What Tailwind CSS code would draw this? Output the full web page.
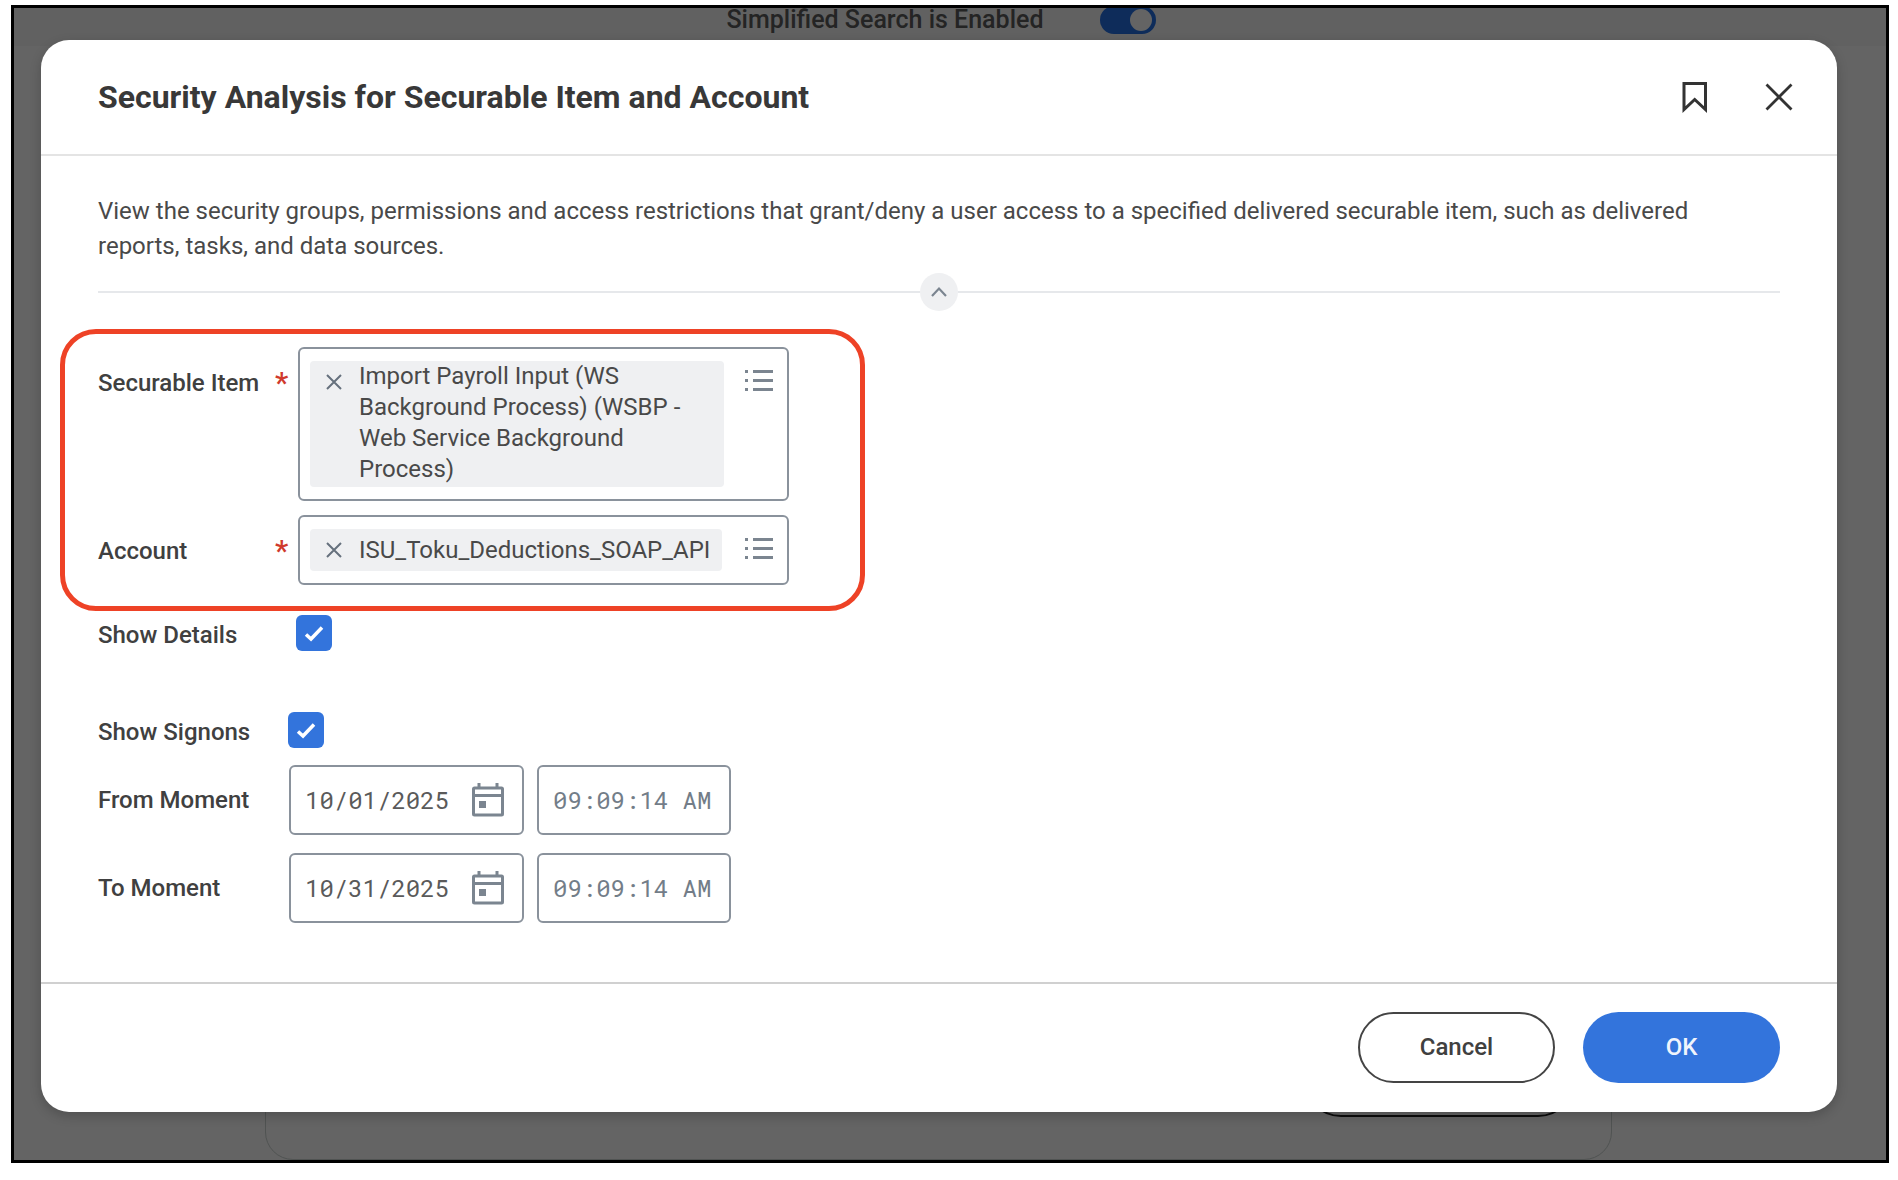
<!DOCTYPE html>
<html lang="en">
<head>
<meta charset="utf-8">
<meta name="viewport" content="width=device-width, initial-scale=1">
<title>Security Analysis for Securable Item and Account</title>
<script src="https://cdn.jsdelivr.net/npm/@tailwindcss/browser@4"></script>
</head>
<body class="min-h-screen bg-white pt-[5px] pr-[9px] pb-[17px] pl-[11px] font-['Roboto','Liberation_Sans',sans-serif] text-2xl text-[#494949]">
<div class="relative isolate overflow-hidden border-3 border-black bg-[#646464] pt-8 pr-[49px] pb-12 pl-[27px]">

  <!-- Page behind the dialog -->
  <div class="absolute inset-x-0 top-0 -z-10 flex h-[38px] items-end justify-center bg-[#616161] pb-3">
    <div class="flex h-7 items-center gap-14 pr-[18px]">
      <span class="text-[25px] leading-7 font-medium text-[#242424]" id="search-label">Simplified Search is Enabled</span>
      <button type="button" role="switch" aria-checked="true" aria-labelledby="search-label" class="flex h-7 w-14 items-center justify-end rounded-full bg-[#0e2c5a] px-1"><span class="size-[22px] rounded-full bg-[#646464]"></span></button>
    </div>
  </div>
  <div class="absolute right-[274px] bottom-0 left-[251px] -z-10 flex h-[120px] items-start justify-end rounded-b-[28px] border border-[#505352] pr-[35px]">
    <div class="h-[76px] w-[273px] rounded-full border-2 border-[#0c0c0c]"></div>
  </div>

  <!-- Dialog -->
  <main role="dialog" aria-labelledby="title" class="rounded-[28px] bg-white shadow-[0_4px_12px_rgba(0,0,0,0.2)]">
    <header class="flex h-[116px] items-center justify-between border-b-2 border-[#e4e4e4] pr-10 pl-[57px]">
      <h1 id="title" class="text-[32px] font-bold text-[#383838]">Security Analysis for Securable Item and Account</h1>
      <div class="flex items-center gap-12">
        <button type="button" aria-label="Bookmark" class="flex size-9 items-center justify-center">
          <svg class="h-8 w-7" viewBox="0 0 28 32" fill="none" stroke="#333" stroke-width="3"><path d="M3 2.500H24.500V28.500L13.700 18.500L3 28.500Z"/></svg>
        </button>
        <button type="button" aria-label="Close" class="flex size-9 items-center justify-center">
          <svg class="size-7" viewBox="0 0 28 28" fill="none" stroke="#333" stroke-width="2.800"><path d="M1.500 1.500L26.500 26.500M26.500 1.500L1.500 26.500"/></svg>
        </button>
      </div>
    </header>

    <div class="px-[57px] pt-[38px] pb-[59px]">
      <p class="pr-12 leading-[35px]">View the security groups, permissions and access restrictions that grant/deny a user access to a specified delivered securable item, such as delivered reports, tasks, and data sources.</p>
      <div class="mt-[9px] flex items-center">
        <div class="h-0.5 grow bg-[#e6e8eb]"></div>
        <button type="button" aria-label="Collapse description" class="flex size-[38px] items-center justify-center rounded-full bg-[#eff0f2]">
          <svg class="h-3 w-4" viewBox="0 0 16 12" fill="none" stroke="#7b8590" stroke-width="2.200"><path d="M1 10L8 2.500L15 10"/></svg>
        </button>
        <div class="h-0.5 grow bg-[#e6e8eb]"></div>
      </div>

      <form>
        <fieldset class="-ml-[38px] mt-[18px] grid h-[282px] w-[805px] grid-cols-[169px_15px_491px] content-start gap-x-2 gap-y-[14px] rounded-[36px] border-5 border-[#ee4226] pt-[13px] pl-[33px]">
          <label for="item" class="pt-[18px] font-medium leading-9 text-[#404040]">Securable Item</label>
          <span class="pt-[18px] text-3xl leading-9 font-medium text-[#d03a2c]">*</span>
          <div class="flex h-[154px] items-start justify-between rounded-md border-2 border-[#8a929c] p-[10px] pt-3">
            <div class="flex h-[126px] w-[414px] items-start gap-[17px] rounded-sm bg-[#eff0f2] pl-4">
              <button type="button" aria-label="Remove Import Payroll Input" class="mt-[13px] shrink-0"><svg class="size-4" viewBox="0 0 16 16" fill="none" stroke="#66717d" stroke-width="2"><path d="M1 1L15 15M15 1L1 15"/></svg></button>
              <output id="item" class="w-[340px] leading-[31px]">Import Payroll Input (WS Background Process) (WSBP - Web Service Background Process)</output>
            </div>
            <button type="button" aria-label="Choose securable item" class="mt-2 mr-1"><svg class="h-6 w-7" viewBox="0 0 28 24" fill="#7b8590"><path d="M0 1h3v3H0zM8 1h20v3H8zM0 10h3v3H0zM8 10h20v3H8zM0 19h3v3H0zM8 19h20v3H8z"/></svg></button>
          </div>

          <label for="account" class="pt-[18px] font-medium leading-9 text-[#404040]">Account</label>
          <span class="pt-[18px] text-3xl leading-9 font-medium text-[#d03a2c]">*</span>
          <div class="flex h-[70px] items-start justify-between rounded-md border-2 border-[#8a929c] p-[10px] pt-3">
            <div class="flex h-[42px] w-[412px] items-start gap-[17px] rounded-sm bg-[#eff0f2] pl-4">
              <button type="button" aria-label="Remove account" class="mt-[13px] shrink-0"><svg class="size-4" viewBox="0 0 16 16" fill="none" stroke="#66717d" stroke-width="2"><path d="M1 1L15 15M15 1L1 15"/></svg></button>
              <output id="account" class="leading-[42px]">ISU_Toku_Deductions_SOAP_API</output>
            </div>
            <button type="button" aria-label="Choose account" class="mt-2 mr-1"><svg class="h-6 w-7" viewBox="0 0 28 24" fill="#7b8590"><path d="M0 1h3v3H0zM8 1h20v3H8zM0 10h3v3H0zM8 10h20v3H8zM0 19h3v3H0zM8 19h20v3H8z"/></svg></button>
          </div>
        </fieldset>

        <div class="mt-1 flex h-9 items-center">
          <label for="details" class="w-[198px] pt-1 font-medium text-[#404040]">Show Details</label>
          <span class="relative flex">
            <input id="details" type="checkbox" checked class="size-9 appearance-none rounded-md bg-[#3374dc]">
            <svg class="pointer-events-none absolute inset-0 size-9" viewBox="0 0 36 36" fill="none" stroke="#fff" stroke-width="3.500"><path d="M10 19.500L15 24L26 12.500"/></svg>
          </span>
        </div>

        <div class="mt-[61px] flex h-9 items-center">
          <label for="signons" class="w-[190px] pt-1 font-medium text-[#404040]">Show Signons</label>
          <span class="relative flex">
            <input id="signons" type="checkbox" checked class="size-9 appearance-none rounded-md bg-[#3374dc]">
            <svg class="pointer-events-none absolute inset-0 size-9" viewBox="0 0 36 36" fill="none" stroke="#fff" stroke-width="3.500"><path d="M10 19.500L15 24L26 12.500"/></svg>
          </span>
        </div>

        <div class="mt-[17px] flex items-center">
          <label for="from-date" class="w-[191px] font-medium text-[#404040]">From Moment</label>
          <div class="flex h-[70px] w-[235px] items-center justify-between rounded-md border-2 border-[#8a929c] pr-[18px] pl-[14px]">
            <input id="from-date" type="text" value="10/01/2025" class="w-[154px] font-['Roboto_Mono','Liberation_Mono',monospace] text-[#5a5a5a] outline-none">
            <button type="button" aria-label="Pick from date"><svg class="h-[34px] w-8" viewBox="0 0 32 34" fill="none" stroke="#7b8590" stroke-width="3"><rect x="1.500" y="5" width="29" height="27" rx="1"/><path d="M1.500 12.500H30.500M7 0V5M25 0V5"/><rect x="7" y="18" width="7" height="7" fill="#7b8590" stroke="none"/></svg></button>
          </div>
          <input type="text" aria-label="From time" value="09:09:14 AM" class="ml-[13px] h-[70px] w-[194px] rounded-md border-2 border-[#8a929c] pl-[14px] font-['Roboto_Mono','Liberation_Mono',monospace] text-[#737d88] outline-none">
        </div>

        <div class="mt-[18px] flex items-center">
          <label for="to-date" class="w-[191px] font-medium text-[#404040]">To Moment</label>
          <div class="flex h-[70px] w-[235px] items-center justify-between rounded-md border-2 border-[#8a929c] pr-[18px] pl-[14px]">
            <input id="to-date" type="text" value="10/31/2025" class="w-[154px] font-['Roboto_Mono','Liberation_Mono',monospace] text-[#5a5a5a] outline-none">
            <button type="button" aria-label="Pick to date"><svg class="h-[34px] w-8" viewBox="0 0 32 34" fill="none" stroke="#7b8590" stroke-width="3"><rect x="1.500" y="5" width="29" height="27" rx="1"/><path d="M1.500 12.500H30.500M7 0V5M25 0V5"/><rect x="7" y="18" width="7" height="7" fill="#7b8590" stroke="none"/></svg></button>
          </div>
          <input type="text" aria-label="To time" value="09:09:14 AM" class="ml-[13px] h-[70px] w-[194px] rounded-md border-2 border-[#8a929c] pl-[14px] font-['Roboto_Mono','Liberation_Mono',monospace] text-[#737d88] outline-none">
        </div>
      </form>
    </div>

    <footer class="flex justify-end gap-7 border-t-2 border-[#d0d0d0] px-[57px] pt-7 pb-[29px] font-medium">
      <button type="button" class="h-[71px] w-[197px] rounded-full border-2 border-[#444] pb-0.5 text-[#404040]">Cancel</button>
      <button type="button" class="h-[71px] w-[197px] rounded-full bg-[#3374dc] pb-0.5 text-[#f0f4fc]">OK</button>
    </footer>
  </main>
</div>
</body>
</html>
